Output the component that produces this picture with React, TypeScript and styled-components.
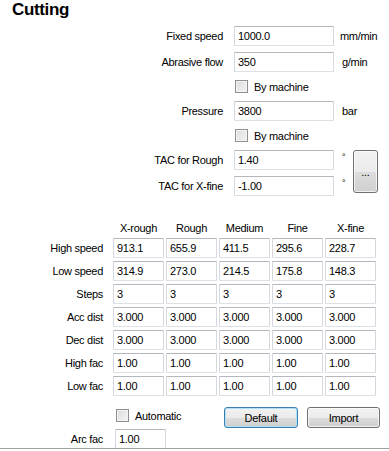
import React from 'react';
import styled, { createGlobalStyle, css } from 'styled-components';

const GlobalStyle = createGlobalStyle`
  html, body {
    margin: 0;
    padding: 0;
    background: #ffffff;
  }
  body {
    font-family: "Liberation Sans", Arial, sans-serif;
    font-size: 11px;
    letter-spacing: -0.3px;
    color: #000000;
  }
`;

const Panel = styled.div`
  width: 389px;
  height: 449px;
  box-sizing: border-box;
  border-bottom: 1px solid #a0a0a0;
  display: flex;
  flex-direction: column;
  overflow: hidden;
`;

const Title = styled.h1`
  margin: 0;
  padding-left: 12px;
  height: 20px;
  font-size: 17px;
  line-height: 20px;
  font-weight: bold;
  letter-spacing: -0.35px;
`;

const Form = styled.div`
  margin-top: 6px;
  display: grid;
  grid-template-columns: 234px 100px 19px 25px;
  grid-auto-rows: auto;
  row-gap: 6px;
  align-items: center;
`;

const Label = styled.label<{ $pad: number }>`
  grid-column: 1;
  justify-self: end;
  padding-right: ${(p) => p.$pad}px;
  white-space: nowrap;
`;

const Unit = styled.span<{ $pad?: number; $sup?: boolean }>`
  padding-left: ${(p) => p.$pad ?? 6}px;
  white-space: nowrap;
  ${(p) =>
    p.$sup &&
    css`
      align-self: start;
      padding-top: 2px;
      font-size: 9px;
      line-height: 10px;
    `}
`;

const Field = styled.input<{ $w: number }>`
  box-sizing: border-box;
  width: ${(p) => p.$w}px;
  height: 20px;
  margin: 0;
  padding: 0 0 0 3px;
  border: 1px solid;
  border-color: #b4b7be #d5d8de #dde1e6 #d5d8de;
  border-radius: 1px;
  background: #ffffff;
  font-family: "Liberation Sans", Arial, sans-serif;
  font-size: 11px;
  letter-spacing: -0.3px;
  color: #000000;
  outline: none;
`;

const CheckRow = styled.div<{ $col: string }>`
  grid-column: ${(p) => p.$col};
  height: 17px;
  display: flex;
  align-items: center;
  gap: 6px;
  padding-left: 1px;
  white-space: nowrap;
`;

const Box = styled.span`
  box-sizing: border-box;
  width: 13px;
  height: 13px;
  border: 1px solid #8e8f8f;
  background: linear-gradient(135deg, #dcdcdc 0%, #f4f4f4 100%);
  box-shadow: inset 0 0 0 1px #f4f4f4;
`;

const button = css`
  box-sizing: border-box;
  margin: 0;
  padding: 0;
  border-radius: 3px;
  background: linear-gradient(#f2f2f2 0%, #ebebeb 50%, #dddddd 51%, #cfcfcf 100%);
  font-family: "Liberation Sans", Arial, sans-serif;
  font-size: 11px;
  letter-spacing: -0.3px;
  color: #000000;
  box-shadow: inset 0 0 0 1px rgba(255, 255, 255, 0.7);
`;

const DotsButton = styled.button`
  ${button};
  grid-column: 4;
  grid-row: span 2;
  align-self: start;
  width: 25px;
  height: 43px;
  border: 1px solid #707070;
  line-height: 10px;
`;

const Table = styled.div`
  margin-top: 25px;
  display: grid;
  grid-template-columns: 111px repeat(5, 51px);
  column-gap: 2px;
  row-gap: 3px;
  align-items: center;
`;

const Head = styled.span`
  height: 14px;
  line-height: 14px;
  text-align: center;
`;

const Footer = styled.div`
  margin-top: 11px;
  display: grid;
  grid-template-columns: 115px 109px 156px;
  row-gap: 1px;
  align-items: start;
`;

const Buttons = styled.div`
  grid-column: 3;
  display: flex;
  gap: 9px;
`;

const PushButton = styled.button<{ $w: number; $default?: boolean }>`
  ${button};
  width: ${(p) => p.$w}px;
  height: 21px;
  border: 1px solid ${(p) => (p.$default ? '#3c7fb1' : '#707070')};
  ${(p) =>
    p.$default &&
    css`
      box-shadow: inset 0 0 0 1px #aee0f7;
    `}
`;

const headers = ['X-rough', 'Rough', 'Medium', 'Fine', 'X-fine'];

const rows: [string, string[]][] = [
  ['High speed', ['913.1', '655.9', '411.5', '295.6', '228.7']],
  ['Low speed', ['314.9', '273.0', '214.5', '175.8', '148.3']],
  ['Steps', ['3', '3', '3', '3', '3']],
  ['Acc dist', ['3.000', '3.000', '3.000', '3.000', '3.000']],
  ['Dec dist', ['3.000', '3.000', '3.000', '3.000', '3.000']],
  ['High fac', ['1.00', '1.00', '1.00', '1.00', '1.00']],
  ['Low fac', ['1.00', '1.00', '1.00', '1.00', '1.00']],
];

const Check = ({ text, col }: { text: string; col: string }) => (
  <CheckRow $col={col}>
    <Box />
    <span>{text}</span>
  </CheckRow>
);

export default function App() {
  return (
    <>
      <GlobalStyle />
      <Panel>
        <Title>Cutting</Title>
        <Form>
          <Label $pad={11}>Fixed speed</Label>
          <Field $w={100} defaultValue="1000.0" />
          <Unit>mm/min</Unit>

          <Label $pad={11}>Abrasive flow</Label>
          <Field $w={100} defaultValue="350" />
          <Unit $pad={8}>g/min</Unit>

          <Check text="By machine" col="2 / -1" />

          <Label $pad={11}>Pressure</Label>
          <Field $w={100} defaultValue="3800" />
          <Unit $pad={8}>bar</Unit>

          <Check text="By machine" col="2 / -1" />

          <Label $pad={11}>TAC for Rough</Label>
          <Field $w={100} defaultValue="1.40" />
          <Unit $pad={8} $sup>°</Unit>
          <DotsButton>...</DotsButton>

          <Label $pad={11}>TAC for X-fine</Label>
          <Field $w={100} defaultValue="-1.00" />
          <Unit $pad={8} $sup>°</Unit>
        </Form>

        <Table>
          <span />
          {headers.map((h) => (
            <Head key={h}>{h}</Head>
          ))}
          {rows.map(([name, values]) => (
            <React.Fragment key={name}>
              <Label $pad={8}>{name}</Label>
              {values.map((v, i) => (
                <Field key={i} $w={51} defaultValue={v} />
              ))}
            </React.Fragment>
          ))}
        </Table>

        <Footer>
          <Check text="Automatic" col="2" />
          <Buttons>
            <PushButton $w={74} $default>
              Default
            </PushButton>
            <PushButton $w={73}>Import</PushButton>
          </Buttons>
          <Label $pad={12} style={{ alignSelf: 'center' }}>
            Arc fac
          </Label>
          <Field $w={51} defaultValue="1.00" />
        </Footer>
      </Panel>
    </>
  );
}
